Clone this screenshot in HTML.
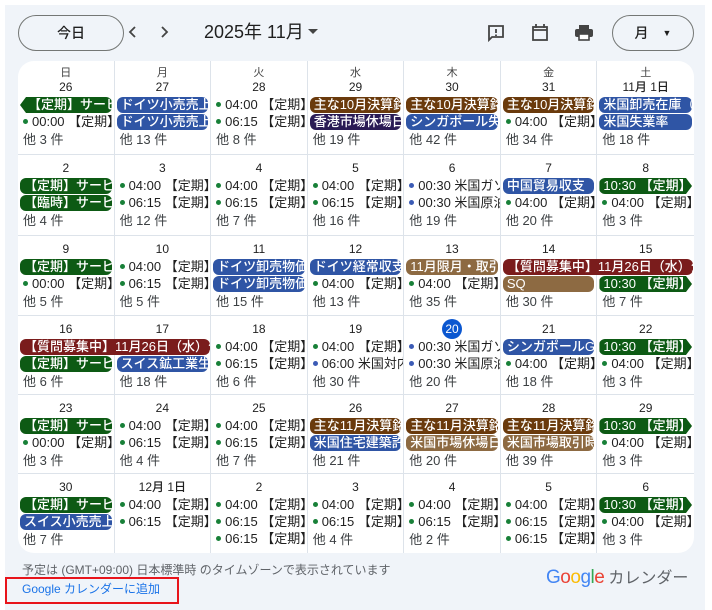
<!DOCTYPE html>
<html><head><meta charset="utf-8">
<style>
*{margin:0;padding:0;box-sizing:border-box}
body{width:712px;height:610px;background:#fff;font-family:"Liberation Sans","Noto Sans CJK JP",sans-serif;color:#1f1f1f;overflow:hidden;position:relative}
#bg{position:absolute;left:5px;top:5px;right:7px;bottom:0;background:#f0f4f9}
.btn{position:absolute;border:1px solid #747775;border-radius:18px;font-size:14px;display:flex;align-items:center;justify-content:center;font-weight:500}
#grid{position:absolute;left:18px;top:61px;width:676px;height:492px;background:#fff;border-radius:16px;overflow:hidden;display:grid;grid-template-columns:repeat(7,1fr);grid-template-rows:94px 81px 80px 79px 79px 79px}
.c{border-right:1px solid #dde3ea;border-bottom:1px solid #dde3ea;padding-top:6px;position:relative;overflow:visible;min-width:0}
.c:nth-child(7n){border-right:none}
.c.last{border-bottom:none}
.dn{font-size:11px;text-align:center;line-height:13px;color:#444}
.d{font-size:12px;text-align:center;line-height:14px;font-weight:500;margin-bottom:3px}
.e{height:16px;margin:0 2px 1px 2px;border-radius:6px;color:#fff;font-size:13px;line-height:16px;padding-left:4px;white-space:nowrap;overflow:hidden;font-weight:500}
.g{background:#0d5a14}.b{background:#2f55a5}.br{background:#6a3a0c}.n{background:#2a1b55}.m{background:#7a1c1c}.t{background:#8d6a42}
.ar{clip-path:polygon(0 0,calc(100% - 6px) 0,100% 50%,calc(100% - 6px) 100%,0 100%)}
.al{clip-path:polygon(6px 0,100% 0,100% 100%,6px 100%,0 50%);padding-left:8px}
.o{height:17px;font-size:13px;line-height:16px;white-space:nowrap;overflow:hidden;padding-left:5px}
.o i{display:inline-block;width:5px;height:5px;border-radius:50%;background:#188038;margin-right:4px;vertical-align:2px}
.o i.bl{background:#3b5bb5}
.mo{font-size:13px;line-height:17px;padding-left:5px;color:#3c4043}
.sp{width:190px;position:relative;z-index:2}
.gap{height:17px}
.today{display:inline-block;width:20px;height:20px;border-radius:50%;background:#0b57d0;color:#fff;line-height:20px;margin-top:-3px;margin-bottom:-3px}
</style></head><body>
<div id="bg"></div>
<div class="btn" style="left:18px;top:15px;width:106px;height:36px">今日</div>
<svg style="position:absolute;left:126px;top:24px" width="14" height="16" viewBox="0 0 14 16"><path d="M9 3L4 8l5 5" fill="none" stroke="#444" stroke-width="1.8"/></svg>
<svg style="position:absolute;left:157px;top:24px" width="14" height="16" viewBox="0 0 14 16"><path d="M5 3l5 5-5 5" fill="none" stroke="#444" stroke-width="1.8"/></svg>
<div style="position:absolute;left:204px;top:21px;font-size:18px;line-height:22px">2025年 11月</div>
<svg style="position:absolute;left:308px;top:29px" width="10" height="6"><path d="M0 0h10L5 5z" fill="#444"/></svg>
<svg style="position:absolute;left:486px;top:23px" width="20" height="20" viewBox="0 0 20 20"><path d="M3 3h14v11H6l-3 3z" fill="none" stroke="#444" stroke-width="1.8"/><path d="M10 6v4M10 11.5v1.5" stroke="#444" stroke-width="1.8"/></svg>
<svg style="position:absolute;left:531px;top:23px" width="18" height="20" viewBox="0 0 18 20"><rect x="2" y="4" width="14" height="13" fill="none" stroke="#444" stroke-width="1.8"/><path d="M2 7h14M5 1v4M13 1v4" stroke="#444" stroke-width="1.8"/></svg>
<svg style="position:absolute;left:574px;top:24px" width="20" height="18" viewBox="0 0 20 18"><rect x="5" y="1" width="10" height="4" fill="#444"/><rect x="1" y="5" width="18" height="8" rx="2" fill="#444"/><rect x="5" y="10" width="10" height="6" fill="#fff" stroke="#444" stroke-width="1.6"/></svg>
<div class="btn" style="left:612px;top:15px;width:82px;height:36px">月<span style="font-size:9px;margin-left:14px">▼</span></div>

<div id="grid">
<div class="c"><div class="dn">日</div><div class="d">26</div><div class="e g al">【定期】サービス</div><div class="o"><i></i>00:00 【定期】</div><div class="mo">他 3 件</div></div>
<div class="c"><div class="dn">月</div><div class="d">27</div><div class="e b">ドイツ小売売上高</div><div class="e b">ドイツ小売売上高</div><div class="mo">他 13 件</div></div>
<div class="c"><div class="dn">火</div><div class="d">28</div><div class="o"><i></i>04:00 【定期】</div><div class="o"><i></i>06:15 【定期】</div><div class="mo">他 8 件</div></div>
<div class="c"><div class="dn">水</div><div class="d">29</div><div class="e br">主な10月決算銘柄</div><div class="e n">香港市場休場日</div><div class="mo">他 19 件</div></div>
<div class="c"><div class="dn">木</div><div class="d">30</div><div class="e br">主な10月決算銘柄</div><div class="e b">シンガポール失業率</div><div class="mo">他 42 件</div></div>
<div class="c"><div class="dn">金</div><div class="d">31</div><div class="e br">主な10月決算銘柄</div><div class="o"><i></i>04:00 【定期】</div><div class="mo">他 34 件</div></div>
<div class="c"><div class="dn">土</div><div class="d">11月 1日</div><div class="e b">米国卸売在庫（確</div><div class="e b">米国失業率</div><div class="mo">他 18 件</div></div>

<div class="c"><div class="d">2</div><div class="e g">【定期】サービス</div><div class="e g">【臨時】サービス</div><div class="mo">他 4 件</div></div>
<div class="c"><div class="d">3</div><div class="o"><i></i>04:00 【定期】</div><div class="o"><i></i>06:15 【定期】</div><div class="mo">他 12 件</div></div>
<div class="c"><div class="d">4</div><div class="o"><i></i>04:00 【定期】</div><div class="o"><i></i>06:15 【定期】</div><div class="mo">他 7 件</div></div>
<div class="c"><div class="d">5</div><div class="o"><i></i>04:00 【定期】</div><div class="o"><i></i>06:15 【定期】</div><div class="mo">他 16 件</div></div>
<div class="c"><div class="d">6</div><div class="o"><i class="bl"></i>00:30 米国ガソリン</div><div class="o"><i class="bl"></i>00:30 米国原油</div><div class="mo">他 19 件</div></div>
<div class="c"><div class="d">7</div><div class="e b">中国貿易収支</div><div class="o"><i></i>04:00 【定期】</div><div class="mo">他 20 件</div></div>
<div class="c"><div class="d">8</div><div class="e g ar">10:30 【定期】サ</div><div class="o"><i></i>04:00 【定期】</div><div class="mo">他 3 件</div></div>

<div class="c"><div class="d">9</div><div class="e g">【定期】サービス</div><div class="o"><i></i>00:00 【定期】</div><div class="mo">他 5 件</div></div>
<div class="c"><div class="d">10</div><div class="o"><i></i>04:00 【定期】</div><div class="o"><i></i>06:15 【定期】</div><div class="mo">他 5 件</div></div>
<div class="c"><div class="d">11</div><div class="e b">ドイツ卸売物価指数</div><div class="e b">ドイツ卸売物価指数</div><div class="mo">他 15 件</div></div>
<div class="c"><div class="d">12</div><div class="e b">ドイツ経常収支</div><div class="o"><i></i>04:00 【定期】</div><div class="mo">他 13 件</div></div>
<div class="c"><div class="d">13</div><div class="e t">11月限月・取引最終</div><div class="o"><i></i>04:00 【定期】</div><div class="mo">他 35 件</div></div>
<div class="c"><div class="d">14</div><div class="e m sp">【質問募集中】11月26日（水）公開</div><div class="e t">SQ</div><div class="mo">他 30 件</div></div>
<div class="c"><div class="d">15</div><div class="gap"></div><div class="e g ar">10:30 【定期】サ</div><div class="mo">他 7 件</div></div>

<div class="c"><div class="d">16</div><div class="e m sp">【質問募集中】11月26日（水）公開</div><div class="e g">【定期】サービス</div><div class="mo">他 6 件</div></div>
<div class="c"><div class="d">17</div><div class="gap"></div><div class="e b">スイス鉱工業生産</div><div class="mo">他 18 件</div></div>
<div class="c"><div class="d">18</div><div class="o"><i></i>04:00 【定期】</div><div class="o"><i></i>06:15 【定期】</div><div class="mo">他 6 件</div></div>
<div class="c"><div class="d">19</div><div class="o"><i></i>04:00 【定期】</div><div class="o"><i class="bl"></i>06:00 米国対内</div><div class="mo">他 30 件</div></div>
<div class="c"><div class="d"><span class="today">20</span></div><div class="o"><i class="bl"></i>00:30 米国ガソリン</div><div class="o"><i class="bl"></i>00:30 米国原油</div><div class="mo">他 20 件</div></div>
<div class="c"><div class="d">21</div><div class="e b">シンガポールGDP</div><div class="o"><i></i>04:00 【定期】</div><div class="mo">他 18 件</div></div>
<div class="c"><div class="d">22</div><div class="e g ar">10:30 【定期】サ</div><div class="o"><i></i>04:00 【定期】</div><div class="mo">他 3 件</div></div>

<div class="c"><div class="d">23</div><div class="e g">【定期】サービス</div><div class="o"><i></i>00:00 【定期】</div><div class="mo">他 3 件</div></div>
<div class="c"><div class="d">24</div><div class="o"><i></i>04:00 【定期】</div><div class="o"><i></i>06:15 【定期】</div><div class="mo">他 4 件</div></div>
<div class="c"><div class="d">25</div><div class="o"><i></i>04:00 【定期】</div><div class="o"><i></i>06:15 【定期】</div><div class="mo">他 7 件</div></div>
<div class="c"><div class="d">26</div><div class="e br">主な11月決算銘柄</div><div class="e b">米国住宅建築許可</div><div class="mo">他 21 件</div></div>
<div class="c"><div class="d">27</div><div class="e br">主な11月決算銘柄</div><div class="e t">米国市場休場日</div><div class="mo">他 20 件</div></div>
<div class="c"><div class="d">28</div><div class="e br">主な11月決算銘柄</div><div class="e t">米国市場取引時間</div><div class="mo">他 39 件</div></div>
<div class="c"><div class="d">29</div><div class="e g ar">10:30 【定期】サ</div><div class="o"><i></i>04:00 【定期】</div><div class="mo">他 3 件</div></div>

<div class="c last"><div class="d">30</div><div class="e g">【定期】サービス</div><div class="e b">スイス小売売上高</div><div class="mo">他 7 件</div></div>
<div class="c last"><div class="d">12月 1日</div><div class="o"><i></i>04:00 【定期】</div><div class="o"><i></i>06:15 【定期】</div></div>
<div class="c last"><div class="d">2</div><div class="o"><i></i>04:00 【定期】</div><div class="o"><i></i>06:15 【定期】</div><div class="o"><i></i>06:15 【定期】</div></div>
<div class="c last"><div class="d">3</div><div class="o"><i></i>04:00 【定期】</div><div class="o"><i></i>06:15 【定期】</div><div class="mo">他 4 件</div></div>
<div class="c last"><div class="d">4</div><div class="o"><i></i>04:00 【定期】</div><div class="o"><i></i>06:15 【定期】</div><div class="mo">他 2 件</div></div>
<div class="c last"><div class="d">5</div><div class="o"><i></i>04:00 【定期】</div><div class="o"><i></i>06:15 【定期】</div><div class="o"><i></i>06:15 【定期】</div></div>
<div class="c last"><div class="d">6</div><div class="e g ar">10:30 【定期】サ</div><div class="o"><i></i>04:00 【定期】</div><div class="mo">他 3 件</div></div>
</div>

<div style="position:absolute;left:22px;top:563px;font-size:12px;color:#5f6368;line-height:14px">予定は (GMT+09:00) 日本標準時 のタイムゾーンで表示されています</div>
<div style="position:absolute;left:5px;top:577px;width:174px;height:27px;border:2px solid #e8141b"></div>
<div style="position:absolute;left:22px;top:582px;font-size:12px;color:#1a73e8;line-height:14px">Google カレンダーに追加</div>
<div style="position:absolute;left:546px;top:567px;font-size:19px;line-height:22px;letter-spacing:-0.5px"><span style="color:#4285f4">G</span><span style="color:#ea4335">o</span><span style="color:#fbbc05">o</span><span style="color:#4285f4">g</span><span style="color:#34a853">l</span><span style="color:#ea4335">e</span><span style="font-size:16px;color:#5f6368;margin-left:4px;letter-spacing:0">カレンダー</span></div>
</body></html>
